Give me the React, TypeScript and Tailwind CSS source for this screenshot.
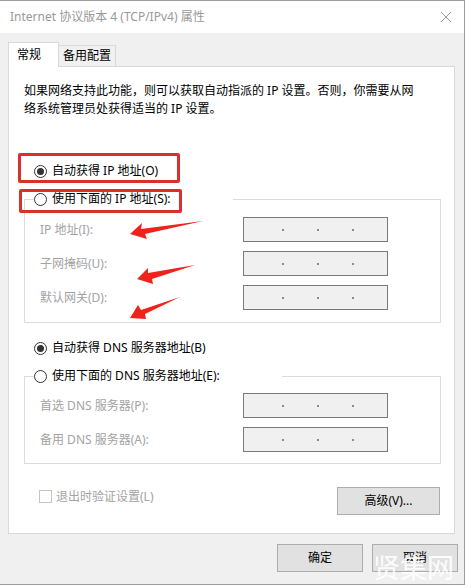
import React from 'react';

const font = { fontFamily: '"Noto Sans", "Noto Sans CJK SC", sans-serif' };

function Radio({ checked, label }: { checked?: boolean; label: string }) {
  return (
    <div className="flex items-center gap-[5px] h-[16px]">
      <div className="w-[13px] h-[13px] rounded-full border border-[#333] bg-white flex items-center justify-center shrink-0">
        {checked && <div className="w-[7px] h-[7px] rounded-full bg-[#333]" />}
      </div>
      <span className="text-[12px] leading-none text-black whitespace-nowrap">{label}</span>
    </div>
  );
}

function IpBox() {
  return (
    <div className="w-[145px] h-[25px] border border-[#7a7a7a] bg-[#f0f0f0] flex items-center pl-[38px] gap-[33px]">
      <div className="w-[2px] h-[2px] bg-[#8a8a8a]" />
      <div className="w-[2px] h-[2px] bg-[#8a8a8a]" />
      <div className="w-[2px] h-[2px] bg-[#8a8a8a]" />
    </div>
  );
}

function Row({ label }: { label: string }) {
  return (
    <div className="flex items-center">
      <span className="w-[203px] text-[12px] text-[#a3a3a3] leading-none">{label}</span>
      <IpBox />
    </div>
  );
}

export default function App() {
  return (
    <div
      className="relative w-[465px] h-[585px] bg-[#f0f0f0] border-t border-r border-b border-[#9c9c9c] overflow-hidden"
      style={font}
    >
      {/* title bar */}
      <div className="h-[32px] bg-white flex items-center justify-between pl-[10px] pr-[10px]">
        <span className="text-[12px] text-[#999]">Internet 协议版本 4 (TCP/IPv4) 属性</span>
        <svg width="12" height="12" viewBox="0 0 12 12" className="mr-[2px]">
          <path d="M1 1 L11 11 M11 1 L1 11" stroke="#9a9a9a" strokeWidth="1" />
        </svg>
      </div>

      {/* tabs */}
      <div className="flex items-end pl-[8px] pt-[9px]">
        <div className="relative z-10 -mb-px h-[25px] w-[51px] bg-white border border-b-0 border-[#d9d9d9] flex items-center pl-[8px] pb-[1px]">
          <span className="text-[12px] text-black leading-none">常规</span>
        </div>
        <div className="h-[21px] w-[57px] border border-l-0 border-b-0 border-[#d9d9d9] flex items-center justify-center">
          <span className="text-[12px] text-black leading-none">备用配置</span>
        </div>
      </div>

      {/* panel */}
      <div className="ml-[8px] w-[447px] h-[468px] bg-white border border-[#d9d9d9] flex flex-col">
        <p className="pl-[15px] pt-[15px] text-[12px] leading-[18px] text-black">
          如果网络支持此功能，则可以获取自动指派的 IP 设置。否则，你需要从网
          <br />
          络系统管理员处获得适当的 IP 设置。
        </p>

        <div className="pl-[25px] mt-[45px]">
          <Radio checked label="自动获得 IP 地址(O)" />
        </div>

        <fieldset className="ml-[15px] w-[417px] mt-[12px] border border-[#dcdcdc] px-0 pb-[12px]">
          <legend className="ml-[9px] w-[199px]">
            <Radio label="使用下面的 IP 地址(S):" />
          </legend>
          <div className="pl-[15px] pt-[10px] flex flex-col gap-[9px]">
            <Row label="IP 地址(I):" />
            <Row label="子网掩码(U):" />
            <Row label="默认网关(D):" />
          </div>
        </fieldset>

        <div className="pl-[25px] mt-[17px]">
          <Radio checked label="自动获得 DNS 服务器地址(B)" />
        </div>

        <fieldset className="ml-[15px] w-[417px] mt-[12px] border border-[#dcdcdc] px-0 pb-[11px]">
          <legend className="ml-[9px] w-[248px]">
            <Radio label="使用下面的 DNS 服务器地址(E):" />
          </legend>
          <div className="pl-[15px] pt-[9px] flex flex-col gap-[9px]">
            <Row label="首选 DNS 服务器(P):" />
            <Row label="备用 DNS 服务器(A):" />
          </div>
        </fieldset>

        <div className="ml-[15px] w-[417px] mt-[23px] flex items-start justify-between">
          <div className="pl-[15px] pt-[3px] flex items-center gap-[4px]">
            <div className="w-[13px] h-[13px] border border-[#c4c4c4] bg-white" />
            <span className="text-[12px] text-[#a3a3a3] leading-none">退出时验证设置(L)</span>
          </div>
          <button className="mr-[1px] w-[103px] h-[28px] bg-[#e1e1e1] border border-[#adadad] text-[12px] text-black">
            高级(V)...
          </button>
        </div>
      </div>

      {/* dialog buttons */}
      <div className="flex justify-end gap-[9px] pr-[6px] mt-[10px]">
        <button className="w-[86px] h-[28px] bg-[#e1e1e1] border border-[#adadad] text-[12px] text-black">确定</button>
        <button className="w-[86px] h-[28px] bg-[#e1e1e1] border border-[#adadad] text-[12px] text-black">取消</button>
      </div>

      {/* annotations */}
      <div className="absolute left-[18px] top-[152px] w-[162px] h-[30px] border-[3px] border-[#d8302b] rounded-[2px] pointer-events-none" />
      <div className="absolute left-[19px] top-[188px] w-[163px] h-[24px] border-[3px] border-[#d8302b] rounded-[2px] pointer-events-none" />
      <svg className="absolute left-0 top-0 pointer-events-none" width="465" height="585">
        <polygon points="130,233 142,222 141,228 203,220 145,233 147,238" fill="#f0231b" />
        <polygon points="137,278 148,267 148,272 195,264 152,278 153,283" fill="#f0231b" />
        <polygon points="130,317 138,304 141,309 180,296 145,313 146,318" fill="#f0231b" />
      </svg>

      {/* watermark */}
      <div className="absolute left-[373px] top-[553px] text-[27px] leading-none text-white/90 pointer-events-none whitespace-nowrap">
        贤集网
      </div>
    </div>
  );
}
